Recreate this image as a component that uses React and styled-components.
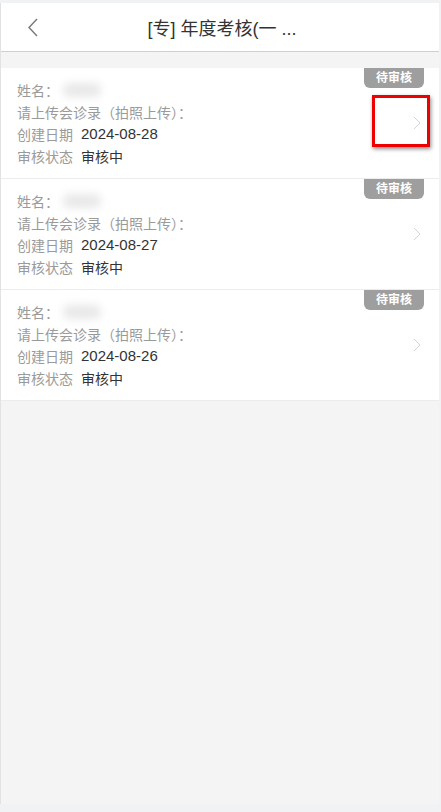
import styled, { createGlobalStyle } from "styled-components"

const GlobalStyle = createGlobalStyle`
  html, body {
    margin: 0;
    padding: 0;
    background: #f1f2f4;
    font-family: "Liberation Sans", "Noto Sans CJK SC", sans-serif;
  }
`

const records = [
  { date: "2024-08-28", marked: true },
  { date: "2024-08-27" },
  { date: "2024-08-26" },
]

const App = () => {
  return (
    <>
      <GlobalStyle />
      <Page>
        <Header>
          <BackButton>
            <svg width="12" height="19" viewBox="0 0 12 19">
              <polyline points="10,1 2,9.5 10,18" fill="none" stroke="#777" strokeWidth="1.4" />
            </svg>
          </BackButton>
          <Title>[专] 年度考核(一 ...</Title>
        </Header>

        <List>
          {records.map((r) => (
            <Card key={r.date}>
              <Badge>待审核</Badge>
              <Fields>
                <Row>
                  <Label>姓名：</Label>
                  <BlurName />
                </Row>
                <Row>
                  <Label>请上传会诊录（拍照上传）：</Label>
                </Row>
                <Row>
                  <Label>创建日期</Label>
                  <Value $size={15}>{r.date}</Value>
                </Row>
                <Row>
                  <Label>审核状态</Label>
                  <Value>审核中</Value>
                </Row>
              </Fields>
              <Arrow>
                <svg width="8" height="14" viewBox="0 0 8 14">
                  <polyline points="1,1 7,7 1,13" fill="none" stroke="#d4d4d4" strokeWidth="1" />
                </svg>
              </Arrow>
              {r.marked && <Highlight />}
            </Card>
          ))}
        </List>
      </Page>
    </>
  )
}

const Page = styled.div`
  width: 439px;
  min-height: 801px;
  margin-top: 3px;
  border-left: 1px solid #e2e2e2;
  background: #f4f4f4;
  box-sizing: border-box;
`

const Header = styled.div`
  height: 49px;
  background: #fff;
  border-bottom: 1px solid #cfcfcf;
  display: flex;
  align-items: center;
  justify-content: center;
  position: relative;
  box-sizing: border-box;
`

const BackButton = styled.div`
  position: absolute;
  left: 26px;
  top: 15px;
  display: flex;
`

const Title = styled.div`
  font-size: 18px;
  color: #333;
  margin-left: 4px;
`

const List = styled.div`
  margin-top: 16px;
  background: #fff;
`

const Card = styled.div`
  position: relative;
  height: 110px;
  border-bottom: 1px solid #ececec;
  display: flex;
  align-items: center;
  padding: 0 18px 0 16px;
`

const Badge = styled.div`
  position: absolute;
  top: 0;
  right: 15px;
  width: 60px;
  height: 20px;
  background: #9e9e9e;
  color: #fff;
  font-size: 12px;
  font-weight: bold;
  line-height: 20px;
  text-align: center;
  border-radius: 0 0 6px 6px;
`

const Fields = styled.div`
  flex: 1;
  display: flex;
  flex-direction: column;
  margin-top: -1px;
`

const Row = styled.div`
  height: 22px;
  display: flex;
  align-items: center;
  gap: 8px;
`

const Label = styled.span`
  font-size: 14px;
  color: #9a9a9a;
`

const Value = styled.span`
  font-size: ${(p) => p.$size || 14}px;
  color: #333;
`

const BlurName = styled.span`
  width: 38px;
  height: 14px;
  margin-left: -4px;
  background: #e8e8e8;
  border-radius: 6px;
  filter: blur(4px);
`

const Arrow = styled.div`
  display: flex;
`

const Highlight = styled.div`
  position: absolute;
  left: 371px;
  top: 27px;
  width: 58px;
  height: 52px;
  border: 3px solid #ee0000;
  box-sizing: border-box;
  box-shadow: 1px 2px 4px rgba(0, 0, 0, 0.45);
`

export default App
